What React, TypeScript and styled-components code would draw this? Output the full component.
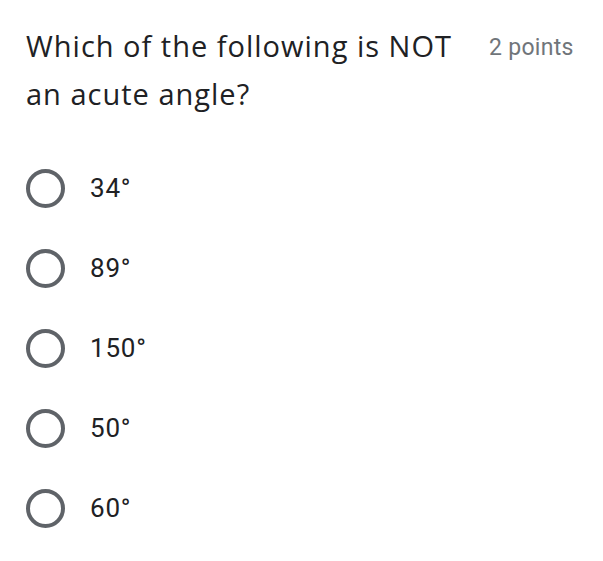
import styled, { createGlobalStyle } from "styled-components";

const GlobalStyle = createGlobalStyle`
  body {
    margin: 0;
    background: #fff;
    font-family: Roboto, "Liberation Sans", sans-serif;
  }
`;

const options = ["34°", "89°", "150°", "50°", "60°"];

export default function App() {
  return (
    <>
      <GlobalStyle />
      <Card>
        <Header>
          <Title>Which of the following is NOT an acute angle?</Title>
          <Points>2 points</Points>
        </Header>
        <OptionList>
          {options.map((opt) => (
            <OptionRow key={opt}>
              <Radio />
              <Label>{opt}</Label>
            </OptionRow>
          ))}
        </OptionList>
      </Card>
    </>
  );
}

const Card = styled.div`
  width: 603px;
  height: 561px;
  box-sizing: border-box;
  padding: 22px 0 0 26px;
  background: #fff;
`;

const Header = styled.div`
  display: flex;
  align-items: flex-start;
`;

const Title = styled.div`
  width: 445px;
  font-family: "Open Sans", Roboto, sans-serif;
  font-size: 29px;
  letter-spacing: 1px;
  line-height: 48px;
  color: #202124;
`;

const Points = styled.div`
  margin-left: 18px;
  margin-top: 12px;
  font-size: 23px;
  letter-spacing: 0.3px;
  line-height: 28px;
  color: #70757a;
`;

const OptionList = styled.div`
  display: flex;
  flex-direction: column;
  margin-top: 30px;
`;

const OptionRow = styled.div`
  display: flex;
  align-items: center;
  height: 80px;
`;

const Radio = styled.div`
  width: 39px;
  height: 39px;
  box-sizing: border-box;
  border: 4px solid #5f6368;
  border-radius: 50%;
  flex-shrink: 0;
`;

const Label = styled.div`
  margin-left: 25px;
  font-size: 26px;
  letter-spacing: 0.8px;
  color: #202124;
`;
